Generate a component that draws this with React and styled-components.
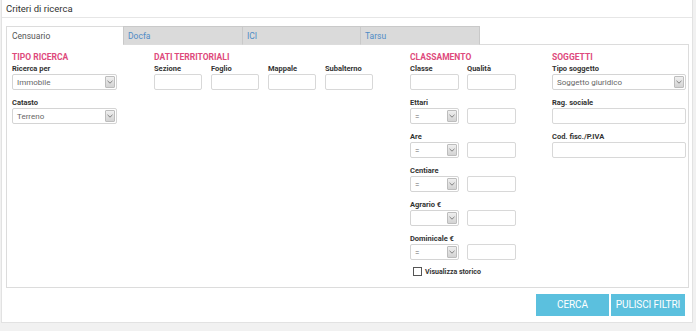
import React from "react";
import styled, { createGlobalStyle } from "styled-components";

const Global = createGlobalStyle`
  html, body { margin: 0; padding: 0; }
  body {
    background: #f1f1f1;
    font-family: Roboto, "Liberation Sans", Arial, sans-serif;
    color: #333;
    width: 696px;
    height: 331px;
    overflow: hidden;
  }
  * { box-sizing: border-box; }
`;

const Panel = styled.div`
  margin: -1px 3px 0 1px;
  height: 324px;
  background: #fff;
  border: 1px solid #e2e2e2;
  display: flex;
  flex-direction: column;
`;

const PanelHeader = styled.div`
  height: 18px;
  border-bottom: 1px solid #e6e6e6;
  padding: 0 0 0 4px;
  font-size: 9.5px;
  line-height: 17px;
  color: #333;
`;

const PanelBody = styled.div`
  padding: 8px 3px 0 4px;
  display: flex;
  flex-direction: column;
`;

const TabRow = styled.div`
  display: flex;
  height: 18px;
  position: relative;
  z-index: 1;
`;

const Tab = styled.div`
  width: ${(p) => p.$w}px;
  height: 19px;
  padding-left: ${(p) => (p.$active ? 5 : 4)}px;
  font-size: 8.5px;
  line-height: 18px;
  color: ${(p) => (p.$active ? "#555" : "#4f8cc6")};
  background: ${(p) => (p.$active ? "#fff" : "#dadada")};
  border: 1px solid ${(p) => (p.$active ? "#dcdcdc" : "#c9c9c9")};
  border-bottom: ${(p) => (p.$active ? "none" : "1px solid #dcdcdc")};
  margin-left: ${(p) => (p.$first ? 0 : -1)}px;
`;

const TabContent = styled.div`
  border: 1px solid #dcdcdc;
  height: 244px;
  padding: 6px 3px 0 5px;
  display: grid;
  grid-template-columns: 142px 256px 142px 1fr;
  align-items: start;
`;

const Column = styled.div`
  display: flex;
  flex-direction: column;
`;

const SectionTitle = styled.div`
  font-size: 8.5px;
  font-weight: 700;
  line-height: 12px;
  color: #de4a7c;
  text-transform: uppercase;
`;

const Field = styled.div`
  display: flex;
  flex-direction: column;
  width: ${(p) => (p.$w ? `${p.$w}px` : "auto")};
  margin-bottom: 7px;
`;

const Label = styled.div`
  font-size: 7.5px;
  font-weight: 700;
  line-height: 11px;
  color: #333;
  white-space: nowrap;
`;

const Input = styled.div`
  height: 16px;
  width: ${(p) => (p.$w ? `${p.$w}px` : "100%")};
  border: 1px solid #d8d8d8;
  border-radius: 2px;
  background: #fff;
`;

const SelectBox = styled.div`
  height: 16px;
  width: ${(p) => (p.$w ? `${p.$w}px` : "100%")};
  border: 1px solid #d4d4d4;
  border-radius: 2px;
  background: #fff;
  display: flex;
  align-items: center;
  padding: 0 1px 0 4px;
`;

const SelectText = styled.span`
  flex: 1;
  font-size: 8px;
  color: #666;
  white-space: nowrap;
`;

const ArrowBox = styled.span`
  width: 10px;
  height: 12px;
  border: 1px solid #bdbdbd;
  border-radius: 1px;
  background: linear-gradient(#efefef, #d3d3d3);
  display: flex;
  align-items: center;
  justify-content: center;
`;

const Row = styled.div`
  display: flex;
  gap: ${(p) => p.$gap}px;
`;

const CheckRow = styled.label`
  display: flex;
  align-items: center;
  gap: 3px;
  margin-left: 3px;
  font-size: 7px;
  font-weight: 700;
  color: #333;
`;

const CheckBox = styled.span`
  width: 9px;
  height: 9px;
  border: 1px solid #555;
  background: #fff;
`;

const ButtonBar = styled.div`
  display: flex;
  justify-content: flex-end;
  gap: 2px;
  padding: 6px 4px 0 0;
`;

const Button = styled.div`
  width: ${(p) => p.$w}px;
  height: 22px;
  background: #5bc0de;
  color: #fff;
  font-size: 10px;
  line-height: 22px;
  text-align: center;
  letter-spacing: -0.1px;
`;

const Chevron = () => (
  <svg width="6" height="4" viewBox="0 0 6 4">
    <path d="M0.5 0.8 L3 3.2 L5.5 0.8" fill="none" stroke="#777" strokeWidth="0.9" />
  </svg>
);

const Select = ({ value, w }) => (
  <SelectBox $w={w}>
    <SelectText>{value}</SelectText>
    <ArrowBox>
      <Chevron />
    </ArrowBox>
  </SelectBox>
);

const pairRows = [
  { label: "Ettari", value: "=" },
  { label: "Are", value: "=" },
  { label: "Centiare", value: "=" },
  { label: "Agrario €", value: "" },
  { label: "Dominicale €", value: "=" },
];

export default function App() {
  return (
    <>
      <Global />
      <Panel>
        <PanelHeader>Criteri di ricerca</PanelHeader>
        <PanelBody>
          <TabRow>
            <Tab $active $first $w={118}>Censuario</Tab>
            <Tab $w={120}>Docfa</Tab>
            <Tab $w={119}>ICI</Tab>
            <Tab $w={120}>Tarsu</Tab>
          </TabRow>
          <TabContent>
            <Column>
              <SectionTitle>Tipo ricerca</SectionTitle>
              <Field $w={105}>
                <Label>Ricerca per</Label>
                <Select value="Immobile" />
              </Field>
              <Field $w={105}>
                <Label>Catasto</Label>
                <Select value="Terreno" />
              </Field>
            </Column>
            <Column>
              <SectionTitle>Dati territoriali</SectionTitle>
              <Row $gap={9}>
                {["Sezione", "Foglio", "Mappale", "Subalterno"].map((l) => (
                  <Field key={l} $w={48}>
                    <Label>{l}</Label>
                    <Input />
                  </Field>
                ))}
              </Row>
            </Column>
            <Column>
              <SectionTitle>Classamento</SectionTitle>
              <Row $gap={8}>
                <Field $w={49}>
                  <Label>Classe</Label>
                  <Input />
                </Field>
                <Field $w={49}>
                  <Label>Qualità</Label>
                  <Input />
                </Field>
              </Row>
              {pairRows.map((r) => (
                <Field key={r.label}>
                  <Label>{r.label}</Label>
                  <Row $gap={8}>
                    <Select value={r.value} w={49} />
                    <Input $w={49} />
                  </Row>
                </Field>
              ))}
              <CheckRow>
                <CheckBox />
                Visualizza storico
              </CheckRow>
            </Column>
            <Column>
              <SectionTitle>Soggetti</SectionTitle>
              <Field $w={134}>
                <Label>Tipo soggetto</Label>
                <Select value="Soggetto giuridico" />
              </Field>
              <Field $w={134}>
                <Label>Rag. sociale</Label>
                <Input />
              </Field>
              <Field $w={134}>
                <Label>Cod. fisc./P.IVA</Label>
                <Input />
              </Field>
            </Column>
          </TabContent>
          <ButtonBar>
            <Button $w={73}>CERCA</Button>
            <Button $w={74}>PULISCI FILTRI</Button>
          </ButtonBar>
        </PanelBody>
      </Panel>
    </>
  );
}
